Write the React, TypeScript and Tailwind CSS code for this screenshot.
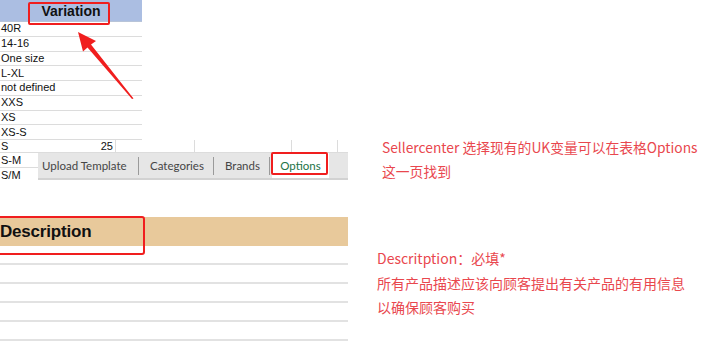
import React from "react";

const rows = ["40R", "14-16", "One size", "L-XL", "not defined", "XXS", "XS", "XS-S"];

export default function App() {
  return (
    <div className="relative w-[707px] h-[342px] overflow-hidden bg-white flex">
      {/* Left column: spreadsheet pieces */}
      <div className="relative w-[348px] flex flex-col" style={{ fontFamily: '"Liberation Sans", Arial, sans-serif' }}>
        {/* header */}
        <div className="relative h-[22px] w-[142px] bg-[#abbee2] border-b border-[#b8c4d8] flex items-center justify-center">
          <span className="text-[14px] font-bold text-[#111] mt-[2px]">Variation</span>
          <div className="absolute left-[28px] top-[2px] w-[82px] h-[23px] border-2 border-[#f01e1e] rounded-[2px]" />
        </div>
        {rows.map((r) => (
          <div key={r} className="h-[14.75px] w-[142px] border-b border-[#dcdcdc] flex items-center text-[11px] leading-none text-[#111] pl-[1px]">
            {r}
          </div>
        ))}
        {/* S row */}
        <div className="h-[13px] w-[348px] border-b border-[#dcdcdc] flex text-[11px] leading-none text-[#111]">
          <div className="w-[116px] border-r border-[#dcdcdc] flex items-center justify-between pl-[1px] pr-[2px]">
            <span>S</span>
            <span>25</span>
          </div>
          <div className="w-[79px] border-r border-[#dcdcdc]" />
          <div className="w-[97px] border-r border-[#dcdcdc]" />
          <div className="w-[46px] border-r border-[#dcdcdc]" />
        </div>
        {/* S-M / S/M with tab bar */}
        <div className="flex">
          <div className="w-[38px] flex flex-col text-[11px] leading-none text-[#111]">
            <div className="h-[15px] border-b border-[#dcdcdc] flex items-center pl-[1px]">S-M</div>
            <div className="h-[15px] flex items-center pl-[1px]">S/M</div>
          </div>
          <div
            className="relative w-[310px] h-[27px] bg-[#e6e6e6] border-b-2 border-[#d2d2d2] flex items-center text-[11.5px] text-[#454545]"
            style={{ fontFamily: 'Lato, "Noto Sans", sans-serif' }}
          >
            <span className="ml-[4px] w-[96px] mt-[1px]">Upload Template</span>
            <div className="w-px h-[18px] bg-[#9a9a9a]" />
            <span className="ml-[11px] w-[63px] mt-[1px]">Categories</span>
            <div className="w-px h-[18px] bg-[#9a9a9a]" />
            <span className="ml-[11px] w-[44px] mt-[1px]">Brands</span>
            <div className="w-px h-[18px] bg-[#9a9a9a]" />
            <div className="ml-[2px] h-full w-[57px] bg-white flex items-center justify-center text-[#217346] pt-[1px]">
              Options
            </div>
            <div className="absolute left-[233px] top-[-1px] w-[57px] h-[23px] border-2 border-[#f01e1e] rounded-[2px]" />
          </div>
        </div>

        {/* Description section */}
        <div className="relative mt-[34px] h-[29px] w-[348px] bg-[#e8c99b] flex items-center">
          <span className="text-[17px] font-bold text-[#111] tracking-[-0.2px]">Description</span>
          <div className="absolute left-[-3px] top-[-1px] w-[148px] h-[39px] border-2 border-[#f01e1e] rounded-[3px]" />
        </div>
        {[0, 1, 2, 3, 4].map((i) => (
          <div key={i} className="h-[19px] w-[348px] border-b-2 border-[#e2e2e2]" />
        ))}

        {/* arrow */}
        <svg className="absolute left-0 top-0" width="160" height="110" viewBox="0 0 160 110">
          <polygon
            points="78,32 96,41 91,44.5 133.5,98.5 132,99 87.5,47.5 83,51.5"
            fill="#f01e1e"
          />
        </svg>
      </div>

      {/* Right column: notes */}
      <div
        className="flex flex-col text-[14px] leading-[24px] text-[#e9474e]"
        style={{ fontFamily: '"Noto Sans CJK SC", "Noto Sans", sans-serif' }}
      >
        <div className="mt-[135px] ml-[34px] text-[13.8px]">
          <div>Sellercenter 选择现有的UK变量可以在表格Options</div>
          <div>这一页找到</div>
        </div>
        <div className="mt-[63px] ml-[29px]">
          <div className="leading-[25px]">Descritption：必填*</div>
          <div className="leading-[25px]">所有产品描述应该向顾客提出有关产品的有用信息</div>
          <div className="leading-[23px]">以确保顾客购买</div>
        </div>
      </div>
    </div>
  );
}
